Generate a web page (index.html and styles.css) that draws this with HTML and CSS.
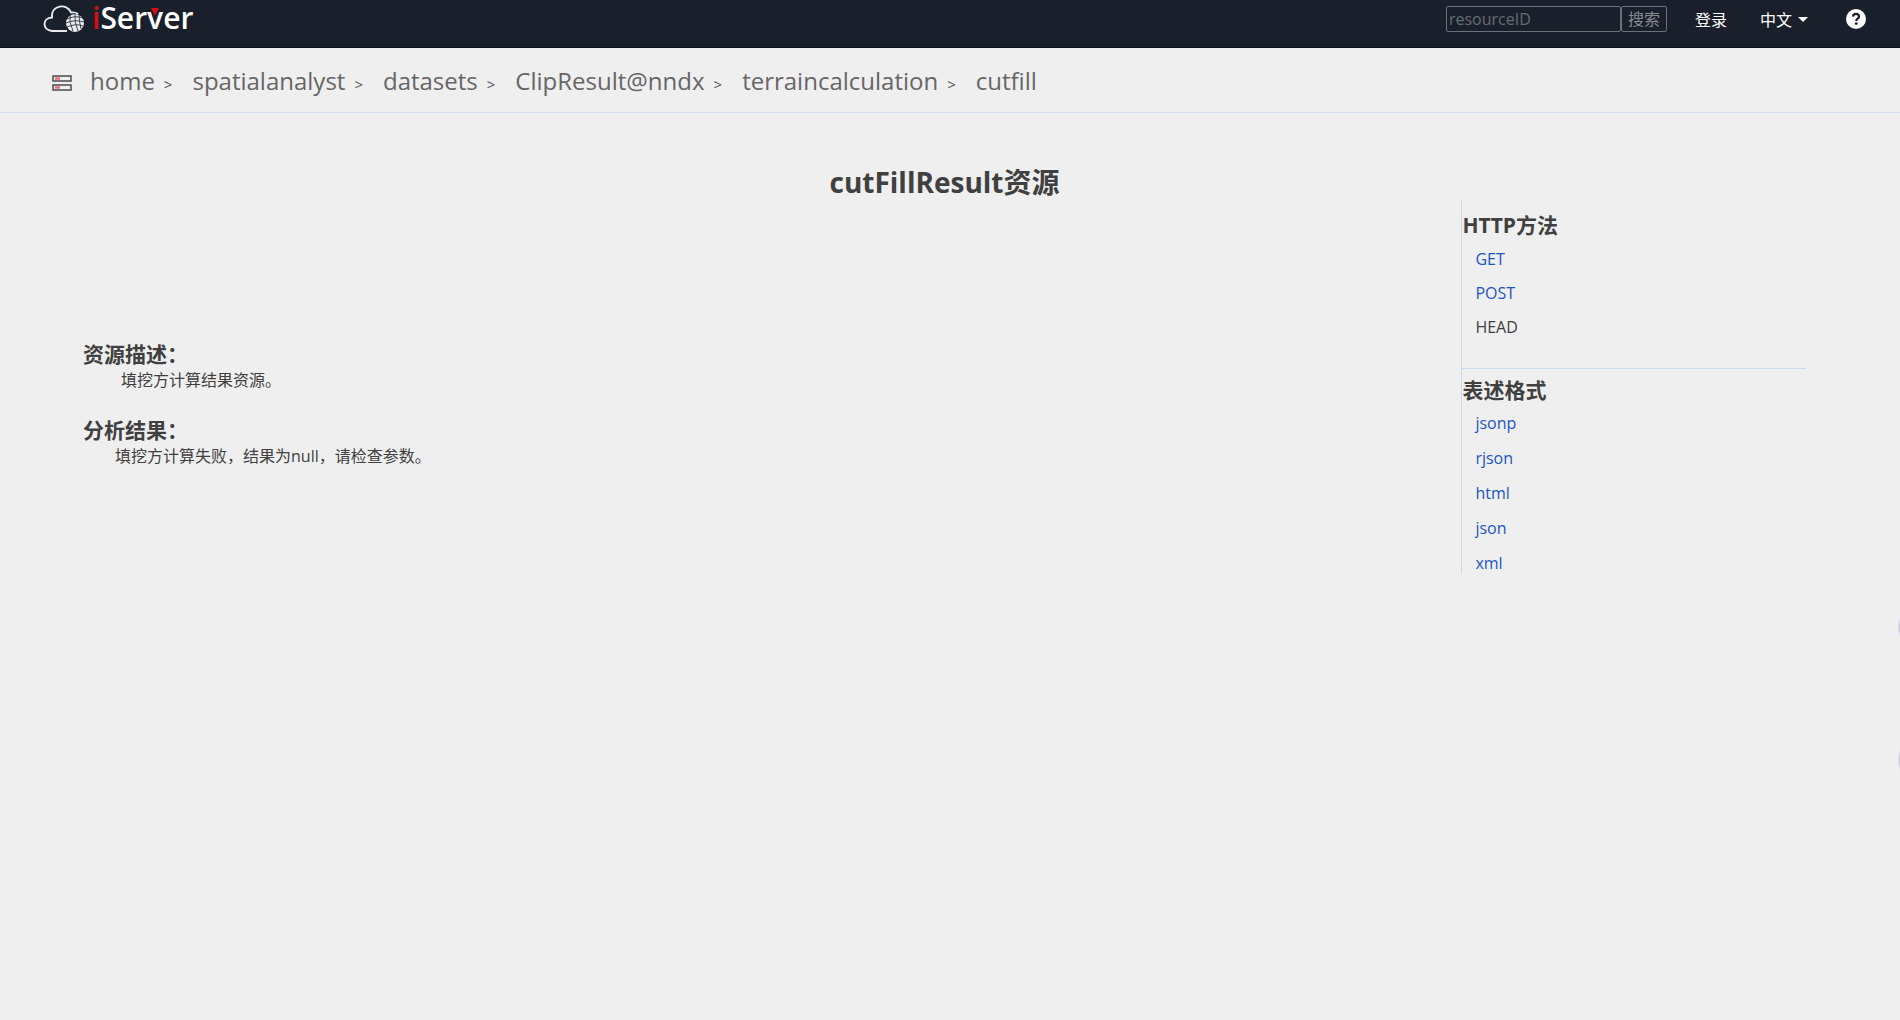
FILE: index.html
```html
<!DOCTYPE html>
<html lang="zh-CN">
<head>
  <meta charset="UTF-8">
  <meta name="viewport" content="width=device-width, initial-scale=1.0">
  <title>cutFillResult资源</title>
  <link rel="stylesheet" href="styles.css">
</head>
<body>
  <header class="topbar">
    <a class="logo" href="#">
      <svg class="logo-cloud" width="42" height="30" viewBox="0 0 42 30" aria-hidden="true">
        <path d="M24 28H9C-1 27-1 15 9 14.500C8 1.500 24 0 28 9.500C31 9 33 9.500 35 11" fill="none" stroke="#e8eaed" stroke-width="1.900"/>
        <circle cx="32" cy="20" r="9" fill="#e8eaed"/>
        <g fill="none" stroke="#1a202b" stroke-width=".8">
          <path d="M24 16Q32 12 40 15M23 20Q32 16 41 19M24 24Q33 20 40 23"/>
          <path d="M27 11Q26 20 30 28M32 10Q31 19 35 28M36 11Q36 18 38 26"/>
        </g>
      </svg>
      <span class="logo-text"><span class="logo-i">i</span>Ser<span class="logo-v">v</span>er</span>
    </a>
    <nav class="tools">
      <form class="search">
        <input type="text" class="search-box" placeholder="resourceID" aria-label="resourceID">
        <button type="button" class="search-btn">搜索</button>
      </form>
      <a class="login" href="#">登录</a>
      <button type="button" class="lang">中文<span class="caret"></span></button>
      <a class="help" href="#" aria-label="帮助">
        <svg width="20" height="20" viewBox="0 0 20 20">
          <circle cx="10" cy="10" r="10" fill="#fff"/>
          <path d="M7 7.600C7.300 3.800 13.200 4.100 13 7.600C12.900 9.600 10.200 9.700 10.200 12" fill="none" stroke="#1a202b" stroke-width="2.200"/>
          <circle cx="10.200" cy="14.600" r="1.400" fill="#1a202b"/>
        </svg>
      </a>
    </nav>
  </header>

  <nav class="breadcrumb">
    <svg class="crumb-icon" width="20" height="16" viewBox="0 0 20 16" aria-hidden="true">
      <g fill="none" stroke="#555" stroke-width="1.600">
        <rect x="1" y="1" width="18" height="5"/>
        <rect x="1" y="10" width="18" height="5"/>
      </g>
      <path d="M3 3.500H8M3 12.500H8" stroke="#e0707c" stroke-width="2.400"/>
    </svg>
    <a href="#">home</a><span class="sep">&gt;</span>
    <a href="#">spatialanalyst</a><span class="sep">&gt;</span>
    <a href="#">datasets</a><span class="sep">&gt;</span>
    <a href="#">ClipResult@nndx</a><span class="sep">&gt;</span>
    <a href="#">terraincalculation</a><span class="sep">&gt;</span>
    <a href="#">cutfill</a>
  </nav>

  <main class="page">
    <h1>cutFillResult资源</h1>
    <div class="columns">
      <section class="content">
        <h2>资源描述：</h2>
        <p class="desc">填挖方计算结果资源。</p>
        <h2>分析结果：</h2>
        <p class="result">填挖方计算失败，结果为null，请检查参数。</p>
      </section>
      <aside class="sidebar">
        <section class="methods">
          <h2>HTTP方法</h2>
          <ul>
            <li><a href="#">GET</a></li>
            <li><a href="#">POST</a></li>
            <li>HEAD</li>
          </ul>
        </section>
        <section class="formats">
          <h2>表述格式</h2>
          <ul>
            <li><a href="#">jsonp</a></li>
            <li><a href="#">rjson</a></li>
            <li><a href="#">html</a></li>
            <li><a href="#">json</a></li>
            <li><a href="#">xml</a></li>
          </ul>
        </section>
      </aside>
    </div>
  </main>

  <div class="side-dots"><i></i><i></i></div>
</body>
</html>
```
FILE: styles.css
```css
* {
  box-sizing: border-box;
}
body {
  margin: 0;
  background: #efefef;
  color: #404040;
  font-family: "Open Sans", "Noto Sans CJK SC", sans-serif;
  font-size: 16px;
}
a {
  color: #1c55c4;
  text-decoration: none;
}
h1, h2, p, ul {
  margin: 0;
  padding: 0;
}

/* top bar */
.topbar {
  display: flex;
  justify-content: space-between;
  height: 48px;
  padding: 0 34px 0 43px;
  background: #1a202b;
  border-bottom: 1px solid #0c111a;
}
.logo {
  display: flex;
  gap: 7px;
  height: 36px;
  align-items: center;
  color: #fff;
}
.logo-text {
  font-size: 30px;
  font-weight: 600;
  line-height: 36px;
}
.logo-i {
  color: #d40f16;
}
.logo-v {
  position: relative;
}
.logo-v::after {
  content: "";
  position: absolute;
  left: 4px;
  top: 11px;
  border: 4px solid transparent;
  border-top: 8px solid #d40f16;
  border-bottom: 0;
}
.tools {
  display: flex;
  align-items: center;
  height: 38px;
}
.search {
  display: flex;
}
.search-box,
.search-btn {
  height: 26px;
  background: transparent;
  border: 1px solid #6b7078;
  border-radius: 2px;
  color: #888c92;
  font-family: inherit;
  font-size: 16px;
  line-height: 24px;
}
.search-box {
  width: 175px;
  padding: 0 2px;
}
.search-box::placeholder {
  color: #666b73;
}
.search-btn {
  width: 46px;
  padding: 0;
}
.login {
  margin-left: 28px;
  color: #fff;
}
.lang {
  display: flex;
  align-items: center;
  gap: 6px;
  margin-left: 33px;
  padding: 0;
  background: none;
  border: 0;
  color: #fff;
  font-family: inherit;
  font-size: 16px;
}
.caret {
  border: 5px solid transparent;
  border-top-color: #fff;
  border-bottom: 0;
}
.help {
  display: flex;
  margin-left: 38px;
}

/* breadcrumb */
.breadcrumb {
  display: flex;
  align-items: center;
  height: 65px;
  padding: 0 52px;
  border-bottom: 1px solid #d4deee;
}
.breadcrumb a {
  color: #666;
  font-size: 24px;
}
.crumb-icon {
  margin: 6px 18px 0 0;
}
.sep {
  margin: 8px 20px 0 9px;
  color: #555;
  font-size: 15px;
}

/* page */
.page {
  padding: 51px 94px 0 83px;
}
h1 {
  font-size: 28px;
  line-height: 36px;
  text-align: center;
}
h2 {
  font-size: 21px;
  line-height: 28px;
}
.columns {
  display: flex;
  justify-content: space-between;
}
.content {
  padding-top: 140px;
}
.content p {
  margin-bottom: 24px;
  line-height: 24px;
}
.desc {
  padding-left: 38px;
}
.result {
  padding-left: 32px;
}
.sidebar {
  width: 20%;
  border-left: 1px solid #c9d8f0;
}
.sidebar ul {
  display: grid;
  gap: 12px;
  padding: 9px 0 0 13px;
  list-style: none;
}
.sidebar li {
  line-height: 22px;
}
.methods {
  padding: 11px 0 30px;
  border-bottom: 1px solid #c9d8f0;
}
.formats {
  padding-top: 7px;
}
.formats ul {
  padding-top: 8px;
  row-gap: 13px;
}

/* round buttons that peek in from the right edge */
.side-dots i {
  position: fixed;
  right: -47px;
  top: 603px;
  width: 48px;
  height: 48px;
  border-radius: 50%;
  background: #bcc6f2;
  box-shadow: 0 0 2px #bcc6f2;
}
.side-dots i + i {
  top: 736px;
}
```
